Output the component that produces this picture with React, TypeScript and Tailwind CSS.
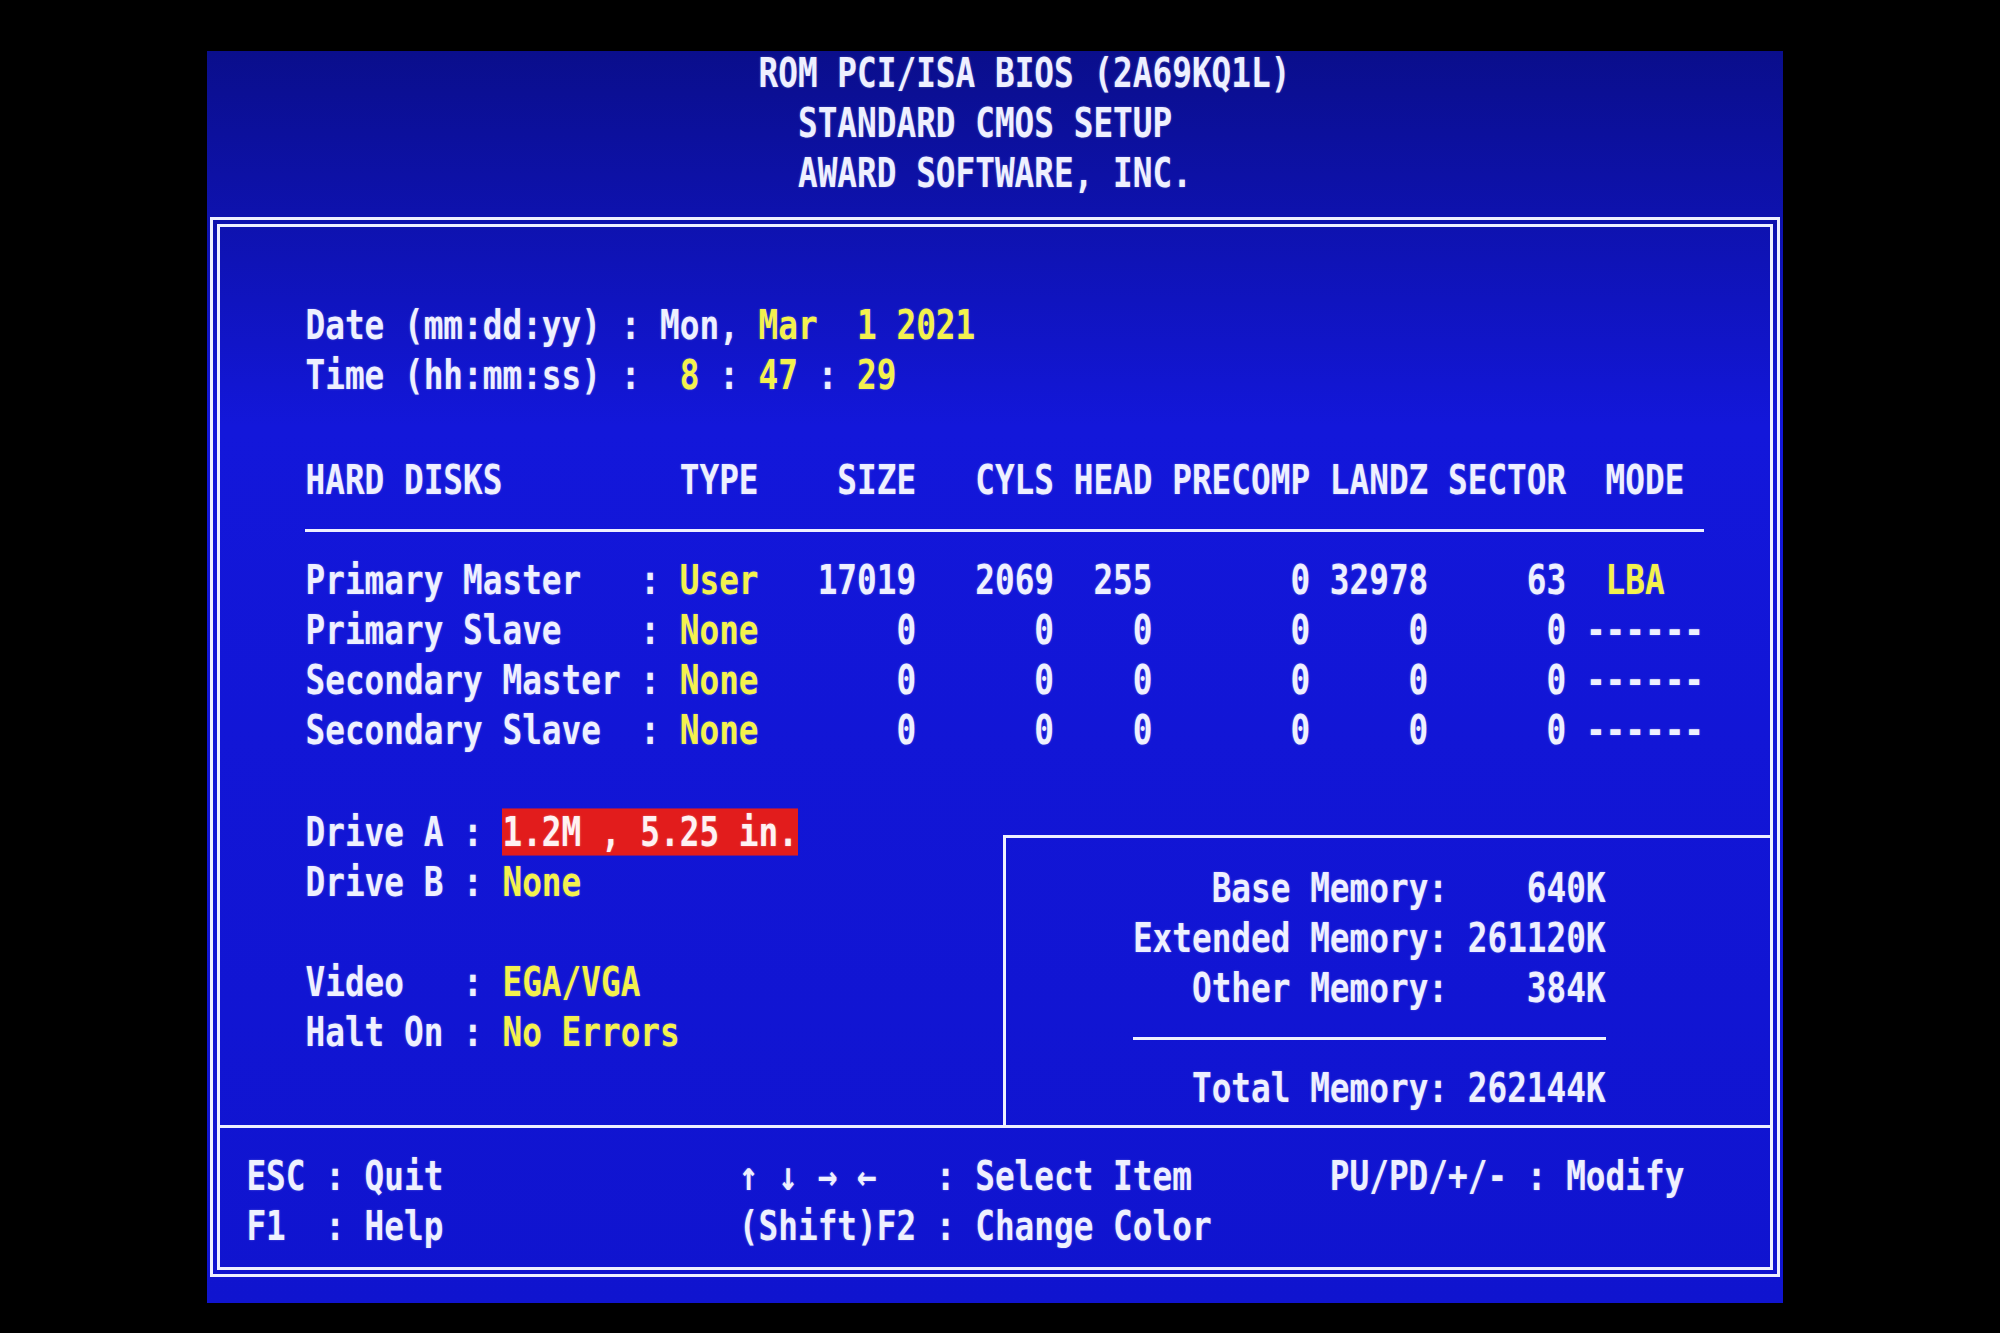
import React from "react";

const WHITE = "text-[#eef0ff]";
const YEL = "text-[#f3f14e]";

type Seg = { t: string; c: string };

const w = (t: string): Seg => ({ t, c: WHITE });
const y = (t: string): Seg => ({ t, c: YEL });
const red = (t: string): Seg => ({
  t,
  c: "inline-block leading-[38px] bg-[#e21c1c] text-[#fff2f2]",
});

function Row({ segs, className = "" }: { segs: Seg[]; className?: string }) {
  return (
    <div className={`h-[50px] leading-[50px] whitespace-pre ${className}`}>
      <span className="inline-block scale-y-[1.24] [text-shadow:0_0_2px_rgba(230,235,255,0.35)]">
        {segs.map((s, i) => (
          <span key={i} className={s.c}>
            {s.t}
          </span>
        ))}
      </span>
    </div>
  );
}

function Empty({ className = "h-[50px]" }: { className?: string }) {
  return <div className={className} />;
}

function HLine({ className }: { className: string }) {
  return (
    <div className="h-[50px] flex items-center">
      <div className={`h-[3px] bg-[#eef0ff] ${className}`} />
    </div>
  );
}

export default function App() {
  return (
    <div className="w-[2000px] h-[1333px] bg-black pt-[51px] pl-[207px] overflow-hidden font-['DejaVu_Sans_Mono',monospace] text-[32.72px] font-bold">
      <div className="w-[1576px] h-[1252px] flex flex-col bg-linear-to-b from-[#0a0e8c] via-[#1317da] via-30% to-[#1014cf]">
        {/* Title */}
        <Row className="pl-[28ch] -mt-[3px]" segs={[w("ROM PCI/ISA BIOS (2A69KQ1L)")]} />
        <Row className="pl-[30ch]" segs={[w("STANDARD CMOS SETUP")]} />
        <Row className="pl-[30ch]" segs={[w("AWARD SOFTWARE, INC.")]} />

        {/* Double frame */}
        <div className="mt-[19px] ml-[3px] w-[1570px] h-[1060px] border-[3px] border-[#eef0ff] p-[4px]">
          <div className="w-full h-full border-[3px] border-[#eef0ff] flex flex-col">
            {/* Top section rows 4-14 */}
            <div className="h-[571px] pt-[23px] pl-[6.7px] flex flex-col">
              <Empty />
              <Row segs={[w("    Date (mm:dd:yy) : Mon, "), y("Mar  1 2021")]} />
              <Row
                segs={[
                  w("    Time (hh:mm:ss) :  "),
                  y("8"),
                  w(" : "),
                  y("47"),
                  w(" : "),
                  y("29"),
                ]}
              />
              <Empty className="h-[55px]" />
              <Row
                segs={[
                  w(
                    "    HARD DISKS         TYPE    SIZE   CYLS HEAD PRECOMP LANDZ SECTOR  MODE"
                  ),
                ]}
              />
              <HLine className="ml-[4ch] w-[71ch]" />
              <Row
                segs={[
                  w("    Primary Master   : "),
                  y("User"),
                  w("   17019   2069  255       0 32978     63  "),
                  y("LBA"),
                ]}
              />
              <Row
                segs={[
                  w("    Primary Slave    : "),
                  y("None"),
                  w("       0      0    0       0     0      0 ------"),
                ]}
              />
              <Row
                segs={[
                  w("    Secondary Master : "),
                  y("None"),
                  w("       0      0    0       0     0      0 ------"),
                ]}
              />
              <Row
                segs={[
                  w("    Secondary Slave  : "),
                  y("None"),
                  w("       0      0    0       0     0      0 ------"),
                ]}
              />
            </div>

            {/* Middle section rows 15-20 */}
            <div className="h-[326.5px] flex">
              <div className="w-[783px] pt-[9px] pl-[6.7px] flex flex-col">
                <Row segs={[w("    Drive A : "), red("1.2M , 5.25 in.")]} />
                <Row segs={[w("    Drive B : "), y("None")]} />
                <Empty />
                <Row segs={[w("    Video   : "), y("EGA/VGA")]} />
                <Row segs={[w("    Halt On : "), y("No Errors")]} />
              </div>
              <div className="flex-1 mt-[37px] border-l-[3px] border-t-[3px] border-[#eef0ff] pt-[25px] pl-[8.7px] flex flex-col">
                <Row segs={[w("          Base Memory:    640K")]} />
                <Row segs={[w("      Extended Memory: 261120K")]} />
                <Row segs={[w("         Other Memory:    384K")]} />
                <HLine className="ml-[6ch] w-[24ch]" />
                <Row segs={[w("         Total Memory: 262144K")]} />
              </div>
            </div>

            {/* Footer rows 22-23 */}
            <div className="border-t-[3px] border-[#eef0ff] pt-[23px] pl-[6.7px] flex flex-col">
              <Row
                segs={[
                  w(
                    " ESC : Quit               \u2191 \u2193 \u2192 \u2190   : Select Item       PU/PD/+/- : Modify"
                  ),
                ]}
              />
              <Row
                segs={[w(" F1  : Help               (Shift)F2 : Change Color")]}
              />
            </div>
          </div>
        </div>
      </div>
    </div>
  );
}
